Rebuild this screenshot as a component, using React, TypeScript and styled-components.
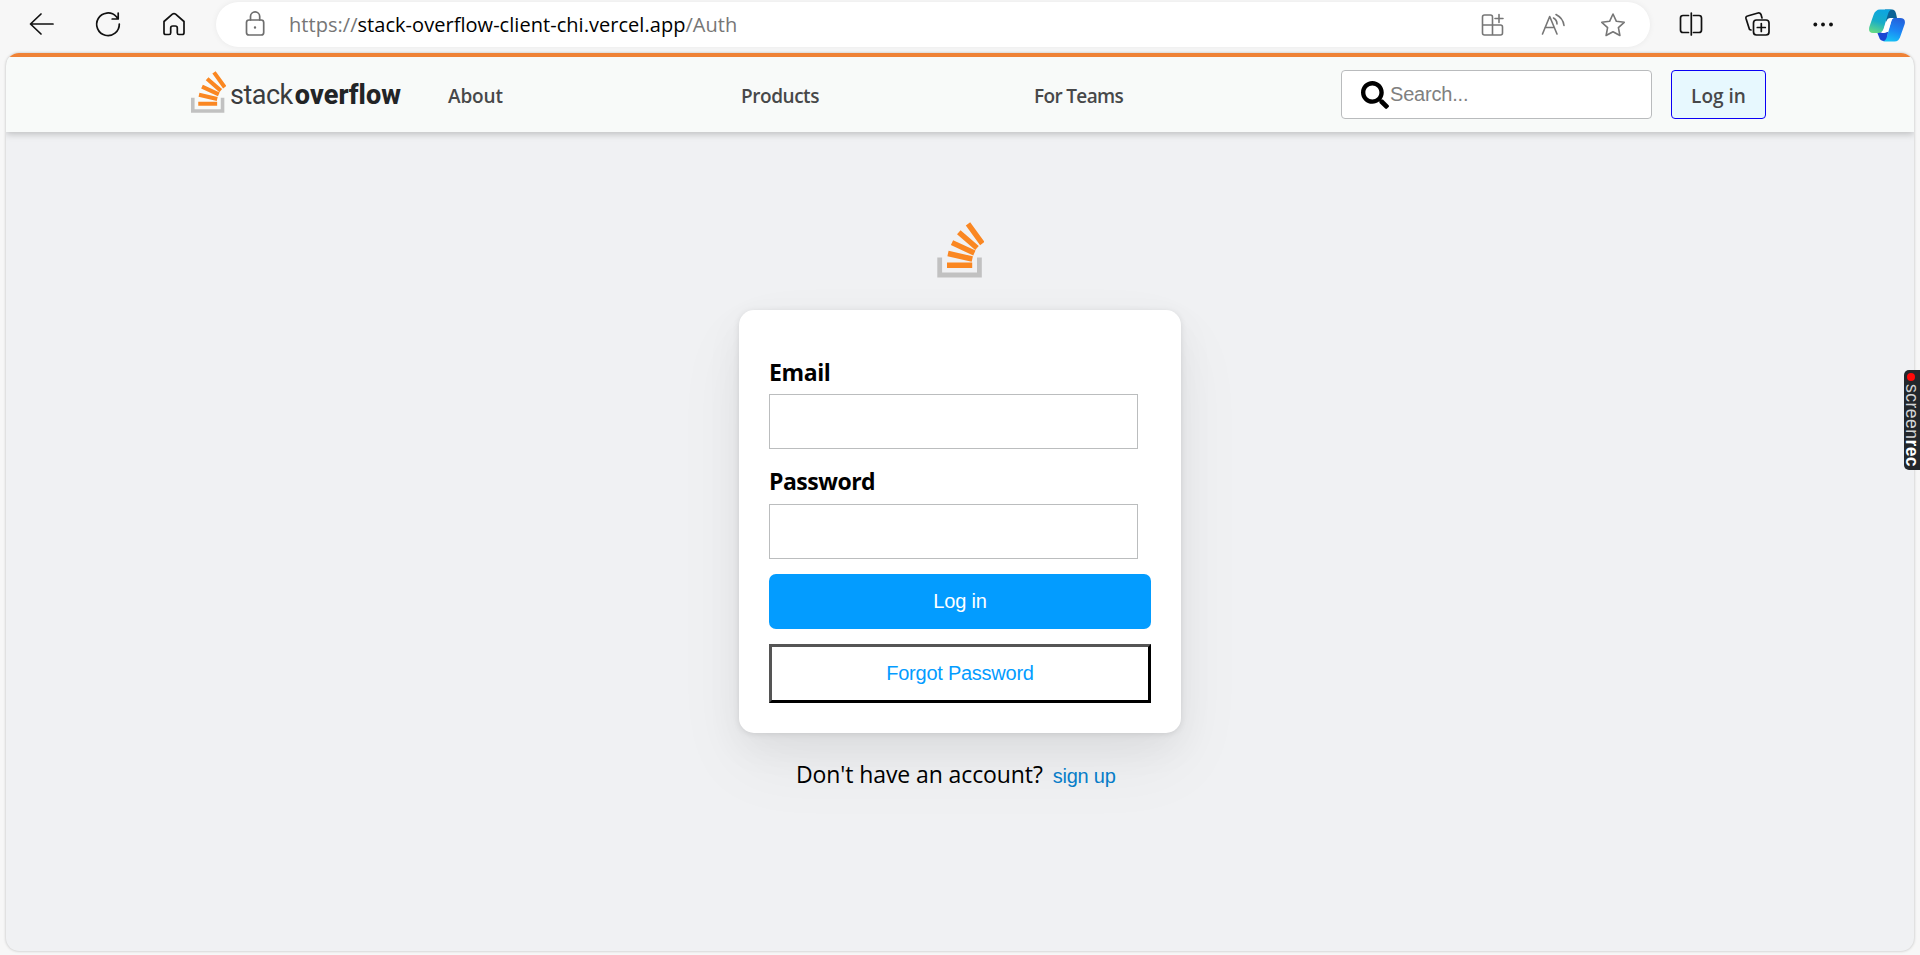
import React from "react";
import styled, { createGlobalStyle } from "styled-components";

const GlobalStyle = createGlobalStyle`
  * { box-sizing: border-box; }
  body { margin: 0; background: #f7f7f7; overflow: hidden; font-family: "Open Sans", "Noto Sans", sans-serif; }
`;

const Browser = styled.div`
  height: 955px;
  display: flex;
  flex-direction: column;
  background: #f7f7f7;
  position: relative;
`;

const Toolbar = styled.div`
  height: 53px;
  flex: none;
  display: flex;
  align-items: flex-start;
`;

const NavIcons = styled.div`
  width: 216px;
  padding-left: 24px;
  height: 48px;
  display: flex;
  align-items: center;
  gap: 30px;
`;

const Glyph = styled.svg<{ $color?: string; $w?: number }>`
  width: 36px;
  height: 36px;
  flex: none;
  fill: none;
  stroke: ${(p) => p.$color ?? "#111"};
  stroke-width: ${(p) => p.$w ?? 1.7};
  stroke-linecap: round;
  stroke-linejoin: round;
`;

const AddressBar = styled.div`
  width: 1434px;
  height: 45px;
  margin-top: 2px;
  border-radius: 23px;
  background: #fff;
  box-shadow: 0 0 6px rgba(0, 0, 0, 0.06);
  display: flex;
  align-items: center;
  padding: 0 19px 0 21px;
`;

const Url = styled.div`
  flex: 1;
  margin-left: 16px;
  font-size: 20px;
  line-height: 26px;
  letter-spacing: 0.04px;
  color: #767676;
  white-space: nowrap;
  b { font-weight: 400; color: #000; }
`;

const AddressActions = styled.div`
  display: flex;
  gap: 24px;
`;

const BrowserActions = styled.div`
  height: 48px;
  flex: 1;
  padding-left: 23px;
  display: flex;
  align-items: center;
  gap: 30px;
`;

const Copilot = styled.svg`
  width: 36px;
  height: 33px;
  flex: none;
  margin: 2px 0 0 -2px;
`;

const Page = styled.div`
  flex: 1;
  margin: 0 6px 4px;
  border-radius: 13px;
  overflow: hidden;
  background: #f0f1f3;
  box-shadow: 0 0 3px rgba(0, 0, 0, 0.25);
  display: flex;
  flex-direction: column;
`;

const Header = styled.header`
  height: 79px;
  flex: none;
  border-top: 4px solid #ef8236;
  background: #f8faf9;
  box-shadow: 0 2px 7px rgba(0, 0, 0, 0.22);
  display: flex;
  align-items: center;
  padding: 0 148px 0 184px;
`;

const Brand = styled.div`
  width: 258px;
  height: 100%;
  display: flex;
  align-items: flex-start;
  padding-top: 14px;
`;

const BrandText = styled.div`
  margin: 8px 0 0 4px;
  font-family: Roboto, sans-serif;
  font-size: 27px;
  line-height: 32px;
  letter-spacing: -0.5px;
  color: #3a3c3e;
  white-space: nowrap;
  b { margin-left: 2px; font-weight: 800; letter-spacing: 0.1px; color: #222426; }
`;

const NavLink = styled.a<{ $width: number; $spacing: number }>`
  width: ${(p) => p.$width}px;
  padding-top: 3px;
  font-size: 19px;
  line-height: 26px;
  font-weight: 600;
  letter-spacing: ${(p) => p.$spacing}px;
  color: #474849;
  white-space: nowrap;
`;

const Search = styled.div`
  width: 311px;
  height: 49px;
  border: 1px solid #b9bbbd;
  border-radius: 4px;
  background: #fff;
  display: flex;
  align-items: center;
  padding-left: 19px;
  font: 20px "Liberation Sans", sans-serif;
  letter-spacing: -0.2px;
  color: #808080;
  span { margin-left: 1px; }
`;

const HeaderLogin = styled.button`
  width: 95px;
  height: 49px;
  margin-left: 19px;
  padding: 3px 0 0;
  border: 1px solid #0a00f5;
  border-radius: 4px;
  background: #e7f8fe;
  font: 600 19px "Open Sans", sans-serif;
  letter-spacing: 0;
  color: #474849;
`;

const Main = styled.main`
  display: flex;
  flex-direction: column;
  align-items: center;
  padding-top: 90px;
`;

const Card = styled.form`
  width: 442px;
  height: 423px;
  margin-top: 31px;
  padding: 47px 30px 30px;
  border-radius: 15px;
  background: #fff;
  box-shadow: 0 15px 38px rgba(0, 0, 0, 0.05), 0 30px 72px rgba(0, 0, 0, 0.05), 0 1px 6px rgba(0, 0, 0, 0.1);
  display: flex;
  flex-direction: column;
`;

const Label = styled.label<{ $spacing: number; $height: number }>`
  height: ${(p) => p.$height}px;
  font-size: 23px;
  line-height: 30px;
  font-weight: 700;
  letter-spacing: ${(p) => p.$spacing}px;
  color: #000;
`;

const Input = styled.input`
  width: 369px;
  height: 55px;
  margin-bottom: 17px;
  border: 1px solid #bbbdbe;
  background: #fff;
  & + button { margin-top: -2px; }
`;

const Submit = styled.button`
  height: 55px;
  flex: none;
  border: 0;
  border-radius: 7px;
  background: #039cff;
  color: #fff;
  font: 20px "Liberation Sans", sans-serif;
  letter-spacing: -0.2px;
`;

const Forgot = styled.button`
  height: 59px;
  flex: none;
  margin-top: 15px;
  border: 3px solid;
  border-color: #555 #000 #000 #555;
  background: #fff;
  color: #039cff;
  font: 20px "Liberation Sans", sans-serif;
  letter-spacing: -0.25px;
`;

const SignupLine = styled.p`
  width: 328px;
  margin: 25px 0 0;
  display: flex;
  align-items: baseline;
  font-size: 23px;
  line-height: 33px;
  letter-spacing: -0.1px;
  color: #000;
  white-space: nowrap;
`;

const SignupLink = styled.a`
  margin-left: 10px;
  font: 20px "Liberation Sans", sans-serif;
  letter-spacing: -0.25px;
  color: #077dc8;
`;

const Recorder = styled.div`
  position: absolute;
  right: 0;
  top: 370px;
  width: 16px;
  height: 100px;
  border-radius: 5px 0 0 5px;
  background: #23272b;
  display: flex;
  flex-direction: column;
  align-items: center;
`;

const RecordDot = styled.i`
  width: 8px;
  height: 8px;
  flex: none;
  margin: 3px 2px 3px 0;
  border-radius: 50%;
  background: #ff0a0a;
`;

const RecorderText = styled.span`
  writing-mode: vertical-rl;
  font: 400 17.5px/16px "Liberation Sans", sans-serif;
  letter-spacing: 0.5px;
  color: #d4d5d6;
  white-space: nowrap;
  b { font-weight: 700; letter-spacing: 0.3px; color: #fff; }
`;

function StackMark({ width, height }: { width: number; height: number }) {
  return (
    <svg width={width} height={height} viewBox="0 0 48 57" preserveAspectRatio="none" fill="none">
      <path d="M3.700 35.500V53H43.400V35.500" stroke="#c1c1c1" strokeWidth="4.800" />
      <g stroke="#fa8722" strokeWidth="5.400">
        <path d="M11 43.300H36.200M12 31.500 36.300 37M16 20.600 38.400 31M22.800 10.200 41 26M32 1.800 46.300 21.600" />
      </g>
    </svg>
  );
}

export default function App() {
  return (
    <Browser>
      <GlobalStyle />
      <Toolbar>
        <NavIcons>
          <Glyph viewBox="0 0 36 36"><path d="M29 18H7M17 8 6.500 18 17 28" /></Glyph>
          <Glyph viewBox="0 0 36 36"><path d="M29.300 18A11.300 11.300 0 1 1 26.200 10.500L28 12.700M28.200 7v6h-6" /></Glyph>
          <Glyph viewBox="0 0 36 36"><path d="M8 15.500 16.400 8.200q1.600-1.300 3.200 0L28 15.500v11.200q0 1.800-1.800 1.800h-3.400q-1.500 0-1.500-1.700V22q0-2-2-2h-2.600q-2 0-2 2v4.800q0 1.700-1.500 1.700H9.800Q8 28.500 8 26.700Z" /></Glyph>
        </NavIcons>
        <AddressBar>
          <Glyph viewBox="0 0 36 36" $color="#6e6e6e">
            <rect x="9.500" y="13" width="17.200" height="15" rx="2.500" />
            <path d="M13.500 13v-3.500a4.600 4.600 0 0 1 9.200 0V13" />
            <circle cx="18" cy="20.500" r="1.200" fill="#6e6e6e" stroke="none" />
          </Glyph>
          <Url>https://<b>stack-overflow-client-chi.vercel.app</b>/Auth</Url>
          <AddressActions>
            <Glyph viewBox="0 0 36 36" $color="#767676" $w={1.6}>
              <path d="M17.500 18H7.500V10q0-2 2-2H15.500q2 0 2 2v18M17.500 18h8q2 0 2 2v6q0 2-2 2H9.500q-2 0-2-2v-8M24 7.500v8M20 11.500h8" />
            </Glyph>
            <Glyph viewBox="0 0 36 36" $color="#767676" $w={1.6}>
              <path d="M7.500 27 14.700 9.500 22 27M10 20.500h9.400M18.500 11q3.500 2 3.500 6M21 7.500q7 3.500 8 11" />
            </Glyph>
            <Glyph viewBox="0 0 36 36" $color="#767676" $w={1.6}>
              <path d="m18 7 3.400 7.300 7.800 1-5.800 5.400 1.500 7.800L18 24.700l-6.900 3.800 1.500-7.800-5.800-5.400 7.800-1Z" />
            </Glyph>
          </AddressActions>
        </AddressBar>
        <BrowserActions>
          <Glyph viewBox="0 0 36 36"><path d="M15.500 9.500H10q-2.500 0-2.500 2.500v12q0 2.500 2.500 2.500h5.500M20.500 9.500H26q2.500 0 2.500 2.500v12q0 2.500-2.500 2.500h-5.500M18.300 7v22" /></Glyph>
          <Glyph viewBox="0 0 36 36"><path d="M12 24 10.500 23.500 7 12.500Q6.500 10.500 8.500 10L19 7q2-.500 3 1.500l1 3.500" /><rect x="14.500" y="14" width="15.500" height="15" rx="3" /><path d="M22.300 17.500v8M18.300 21.500h8" /></Glyph>
          <Glyph viewBox="0 0 36 36"><g fill="#111" stroke="none"><circle cx="10.300" cy="18.500" r="1.900" /><circle cx="18" cy="18.500" r="1.900" /><circle cx="26" cy="18.500" r="1.900" /></g></Glyph>
          <Copilot viewBox="0 0 36 33">
            <defs>
              <linearGradient id="copilotLeft" x1="0.500" y1="0" x2="0.200" y2="1"><stop stopColor="#0ca5e0" /><stop offset=".5" stopColor="#18adc8" /><stop offset="1" stopColor="#67dc82" /></linearGradient>
              <linearGradient id="copilotRight" x1="0.600" y1="0" x2="0.300" y2="1"><stop stopColor="#2462dc" /><stop offset=".5" stopColor="#1b86f5" /><stop offset="1" stopColor="#16c3f5" /></linearGradient>
            </defs>
            <path d="M8 23H19L18 32H15Q11 32 10 28Z" fill="#1846d3" />
            <path d="M16 .500h7q3 0 4 4l1 4.500h-5L17 13Z" fill="#0c6296" />
            <path d="M11 .500H23Q20 1 19 5L14.500 20Q13 24 9 24H4Q-1 24 .300 18L4.500 6Q6.500.500 11 .500Z" fill="url(#copilotLeft)" />
            <path d="M25 9h6q6 0 4.700 6L31.500 27q-1.500 5.500-6 5.500H14q3-1 4-5l4-14q1-4.500 3-4.500Z" fill="url(#copilotRight)" />
            <path d="M17.500 12q1-3 4-3H25q-2 0-3 4l-2.500 8q-1.300 3-4.500 3H11q2.500-.500 3.500-3Z" fill="#fff" />
          </Copilot>
        </BrowserActions>
      </Toolbar>
      <Page>
        <Header>
          <Brand>
            <StackMark width={36} height={43} />
            <BrandText>stack<b>overflow</b></BrandText>
          </Brand>
          <NavLink $width={293} $spacing={-0.15}>About</NavLink>
          <NavLink $width={293} $spacing={-0.45}>Products</NavLink>
          <NavLink $width={307} $spacing={-0.65}>For Teams</NavLink>
          <Search>
            <svg width="28" height="28" viewBox="0 0 512 512"><path d="M505 442.700 405.300 343c-4.500-4.500-10.600-7-17-7H372c27.600-35.300 44-79.700 44-128C416 93.100 322.900 0 208 0S0 93.100 0 208s93.100 208 208 208c48.300 0 92.700-16.400 128-44v16.300c0 6.400 2.500 12.500 7 17l99.700 99.700c9.400 9.400 24.600 9.400 33.900 0l28.300-28.300c9.400-9.400 9.400-24.600.1-34zM208 336c-70.700 0-128-57.200-128-128 0-70.700 57.200-128 128-128 70.700 0 128 57.200 128 128 0 70.700-57.200 128-128 128z" /></svg>
            <span>Search...</span>
          </Search>
          <HeaderLogin>Log in</HeaderLogin>
        </Header>
        <Main>
          <StackMark width={48} height={57} />
          <Card>
            <Label $spacing={-0.4} $height={37}>Email</Label>
            <Input aria-label="Email" />
            <Label $spacing={-0.5} $height={38}>Password</Label>
            <Input aria-label="Password" type="password" />
            <Submit type="button">Log in</Submit>
            <Forgot type="button">Forgot Password</Forgot>
          </Card>
          <SignupLine>Don't have an account?<SignupLink>sign up</SignupLink></SignupLine>
        </Main>
      </Page>
      <Recorder>
        <RecordDot />
        <RecorderText>screen<b>rec</b></RecorderText>
      </Recorder>
    </Browser>
  );
}
